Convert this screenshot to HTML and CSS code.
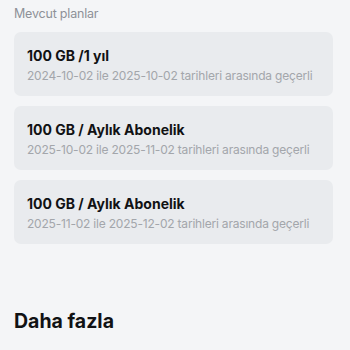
FILE: index.html
```html
<!DOCTYPE html>
<html lang="tr">
<head>
<meta charset="utf-8">
<link rel="stylesheet" href="styles.css">
</head>
<body>
<div class="page">
  <div class="section-label">Mevcut planlar</div>
  <div class="plans">
    <div class="plan">
      <div class="plan-title">100 GB /1 yıl</div>
      <div class="plan-sub">2024-10-02 ile 2025-10-02 tarihleri arasında geçerli</div>
    </div>
    <div class="plan">
      <div class="plan-title">100 GB / Aylık Abonelik</div>
      <div class="plan-sub">2025-10-02 ile 2025-11-02 tarihleri arasında geçerli</div>
    </div>
    <div class="plan">
      <div class="plan-title">100 GB / Aylık Abonelik</div>
      <div class="plan-sub">2025-11-02 ile 2025-12-02 tarihleri arasında geçerli</div>
    </div>
  </div>
  <h2 class="more">Daha fazla</h2>
</div>
</body>
</html>
```
FILE: styles.css
```css
html, body {
  margin: 0;
  padding: 0;
  background: #f4f5f7;
}
body {
  font-family: Inter, "Noto Sans", sans-serif;
  width: 350px;
  height: 350px;
  overflow: hidden;
}
.page {
  padding: 6px 17px 0 14px;
}
.section-label {
  font-size: 12.5px;
  letter-spacing: -0.2px;
  color: #8e9197;
  line-height: 16px;
  height: 16px;
}
.plans {
  margin-top: 10px;
  display: flex;
  flex-direction: column;
  gap: 10px;
}
.plan {
  background: #e9ebee;
  border-radius: 7px;
  height: 64px;
  box-sizing: border-box;
  padding: 15px 13px 0 13px;
}
.plan-title {
  font-size: 14px;
  font-weight: 700;
  color: #111214;
  line-height: 18px;
}
.plan-sub {
  font-size: 12px;
  letter-spacing: -0.2px;
  color: #a3a6ab;
  line-height: 18px;
  margin-top: 2px;
  white-space: nowrap;
}
.more {
  margin: 65px 0 0 0;
  font-size: 19.5px;
  font-weight: 700;
  color: #111214;
  line-height: 24px;
}
```
